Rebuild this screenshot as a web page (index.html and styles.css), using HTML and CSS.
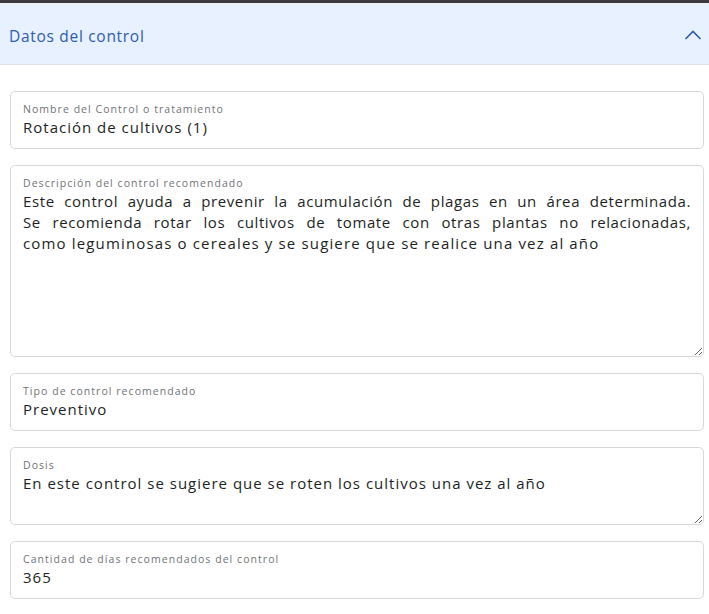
FILE: index.html
```html
<!DOCTYPE html>
<html lang="es">
<head>
<meta charset="utf-8">
<link rel="stylesheet" href="styles.css">
</head>
<body>
<div class="topbar"></div>
<div class="accordion">
  <div class="acc-header">
    <span class="acc-title">Datos del control</span>
    <svg class="chev" width="18" height="12" viewBox="0 0 18 12"><path d="M1.5 10 L9 2.5 L16.5 10" fill="none" stroke="#2f5cae" stroke-width="1.6"/></svg>
  </div>
  <div class="acc-body">
    <div class="field">
      <div class="label">Nombre del Control o tratamiento</div>
      <div class="value">Rotación de cultivos (1)</div>
    </div>
    <div class="field area tall">
      <div class="label">Descripción del control recomendado</div>
      <div class="value">
        <span class="line full">Este control ayuda a prevenir la acumulación de plagas en un área determinada.</span>
        <span class="line full">Se recomienda rotar los cultivos de tomate con otras plantas no relacionadas,</span>
        <span class="line">como leguminosas o cereales y se sugiere que se realice una vez al año</span>
      </div>
    </div>
    <div class="field">
      <div class="label">Tipo de control recomendado</div>
      <div class="value">Preventivo</div>
    </div>
    <div class="field area short">
      <div class="label">Dosis</div>
      <div class="value">En este control se sugiere que se roten los cultivos una vez al año</div>
    </div>
    <div class="field">
      <div class="label">Cantidad de días recomendados del control</div>
      <div class="value">365</div>
    </div>
  </div>
</div>
</body>
</html>
```
FILE: styles.css
```css
html, body { margin: 0; padding: 0; background: #fff; }
body { font-family: "Open Sans", "DejaVu Sans", sans-serif; color: #212529; width: 709px; overflow: hidden; }
.topbar { height: 3px; background: #3b3b3d; border-bottom: 2px solid #eef0f2; }
.acc-header {
  height: 60px; background: #e7f1ff; border-bottom: 1px solid #dfe3e8;
  display: flex; align-items: center; justify-content: space-between;
  padding: 0 7px 0 9px; box-sizing: border-box;
}
.acc-title { font-size: 15.5px; color: #2f5cae; letter-spacing: 0.7px; margin-top: 2px; }
.chev { display: block; margin-top: 1px; }
.acc-body { padding: 26px 5px 16px 10px; display: flex; flex-direction: column; gap: 16px; }
.field {
  border: 1px solid #d6d9dc; border-radius: 5px; height: 58px; box-sizing: border-box;
  padding: 10px 12px 0 12px; display: flex; flex-direction: column;
}
.field.area { resize: vertical; overflow: hidden; }
.field.tall { height: 192px; }
.field.short { height: 78px; }
.label { font-size: 10.5px; color: #6f7378; line-height: 14px; letter-spacing: 1.05px; }
.value { font-size: 15px; color: #1c1f23; line-height: 21px; margin-top: 1px; letter-spacing: 1px; }
.line { display: block; }
.line.full { text-align: justify; text-align-last: justify; letter-spacing: 0.6px; }
.line:last-child { letter-spacing: 1.15px; }
```
